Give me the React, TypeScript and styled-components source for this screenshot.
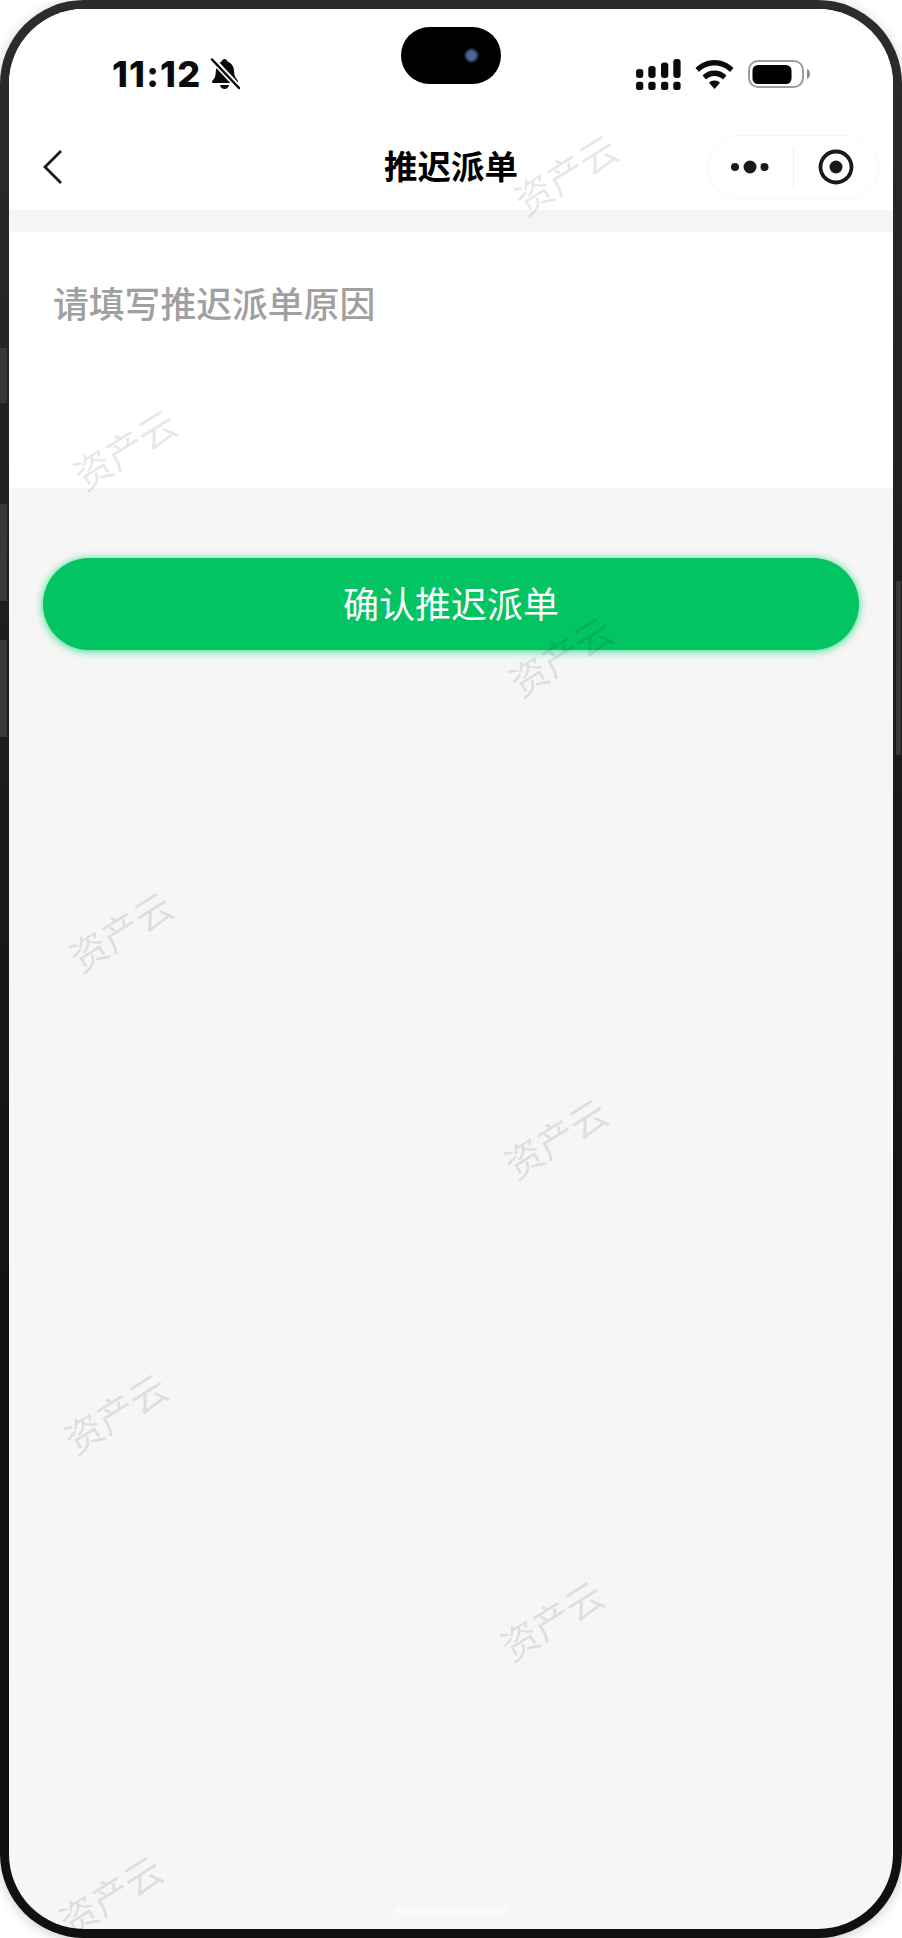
import React from 'react';
import styled, { createGlobalStyle } from 'styled-components';

const GlobalStyle = createGlobalStyle`
  html, body {
    margin: 0;
    padding: 0;
    background: #fff;
  }
  body {
    font-family: "Noto Sans CJK SC", "Liberation Sans", sans-serif;
  }
`;

const Frame = styled.div`
  position: relative;
  box-sizing: border-box;
  width: 902px;
  height: 1938px;
  padding: 9px;
  border-radius: 84px;
  background: linear-gradient(#2c2c2e, #1e1e20 30%, #121213 70%, #101011);
  box-shadow: 0 2px 12px rgba(0, 0, 0, 0.2);
`;

const SideKey = styled.span<{ $top: number; $height: number; $right?: boolean }>`
  position: absolute;
  top: ${(p) => p.$top}px;
  ${(p) => (p.$right ? 'right: 1px; width: 5px;' : 'left: 0; width: 7px;')}
  height: ${(p) => p.$height}px;
  background: #38383a;
`;

const Screen = styled.div`
  position: relative;
  height: 100%;
  border-radius: 75px;
  background: #f6f6f6;
  display: flex;
  flex-direction: column;
  overflow: hidden;
`;

const Head = styled.div`
  background: #fff;
  height: 201px;
  flex: none;
  display: flex;
  flex-direction: column;
`;

const StatusBar = styled.div`
  height: 101px;
  flex: none;
  display: grid;
  grid-template-columns: 1fr 100px 1fr;
  align-items: start;
  padding: 18px 0 0;
  box-sizing: border-box;
`;

const StatusLeft = styled.div`
  display: flex;
  align-items: center;
  height: 56px;
  margin-top: 19px;
  padding-left: 103px;
  gap: 9px;
`;

const Time = styled.span`
  font-family: Inter, "Liberation Sans", sans-serif;
  font-weight: 800;
  font-size: 36px;
  line-height: 34px;
  letter-spacing: 1.2px;
  color: #0a0a0a;
`;

const Island = styled.div`
  width: 100px;
  height: 57px;
  border-radius: 29px;
  background: #000;
  display: flex;
  align-items: center;
  justify-content: flex-end;
  padding-right: 22px;
  box-sizing: border-box;
`;

const Camera = styled.span`
  width: 15px;
  height: 15px;
  border-radius: 50%;
  background: radial-gradient(circle, #47689a 0 38%, #1b2233 62%, #10131c 100%);
`;

const StatusRight = styled.div`
  display: flex;
  align-items: center;
  height: 56px;
  margin-top: 19px;
  padding-left: 135px;
  gap: 14px;
`;

const Nav = styled.div`
  position: relative;
  flex: 1;
  display: flex;
  align-items: center;
  justify-content: space-between;
  padding: 13px 14px 0 34px;
`;

const Title = styled.div`
  position: absolute;
  left: 0;
  right: 0;
  top: 30px;
  text-align: center;
  font-size: 33.5px;
  line-height: 50px;
  font-weight: 700;
  color: #000;
`;

const Capsule = styled.div`
  box-sizing: border-box;
  width: 172px;
  height: 64px;
  border: 1.5px solid #f6f6f6;
  border-radius: 32px;
  display: flex;
  align-items: center;
`;

const CapsuleCell = styled.div`
  flex: 1;
  display: flex;
  align-items: center;
  justify-content: center;
`;

const CapsuleLine = styled.span`
  width: 1px;
  height: 40px;
  background: #efefef;
`;

const Gap = styled.div`
  flex: none;
  height: 22px;
  background: #f5f5f5;
`;

const Field = styled.div`
  flex: none;
  height: 256px;
  background: #fff;
  padding: 44px 0 0 44px;
  box-sizing: border-box;
`;

const Placeholder = styled.div`
  font-size: 35.8px;
  line-height: 52px;
  font-weight: 500;
  color: #a0a0a0;
`;

const Actions = styled.div`
  flex: none;
  padding: 70px 34px 0;
`;

const ConfirmButton = styled.button`
  display: block;
  width: 100%;
  height: 92px;
  border: none;
  border-radius: 46px;
  background: #03c463;
  box-shadow: 0 1px 8px rgba(0, 214, 110, 0.85);
  color: #fff;
  font-family: inherit;
  font-size: 36px;
  font-weight: 400;
  padding: 0 0 4px;
`;

const HomeBar = styled.span`
  position: absolute;
  left: 386px;
  bottom: 14px;
  width: 113px;
  height: 8px;
  border-radius: 4px;
  background: #fafafa;
`;

const Mark = styled.span<{ $x: number; $y: number }>`
  position: absolute;
  left: ${(p) => p.$x - 10}px;
  top: ${(p) => p.$y - 11}px;
  transform: translate(-50%, -50%) rotate(-32deg);
  font-size: 37.5px;
  line-height: 42px;
  font-weight: 400;
  white-space: nowrap;
  color: rgba(0, 0, 0, 0.11);
  pointer-events: none;
`;

const marks = [
  [566, 175],
  [125, 450],
  [561, 657],
  [121, 932],
  [556, 1139],
  [116, 1414],
  [552, 1621],
  [111, 1896],
];

const BellOff = () => (
  <svg width="30" height="32" viewBox="0 0 30 32">
    <path
      d="M14.500 1C16 1 17 2 17.500 3.500 21.500 5 24 8.500 24 13l.5 4c.5 2.500 2.500 4 3.500 6v2H3c-1 0-1.500-1.500-.5-2.500 2-2 3-4 3-6.500L6 12c.5-4 2.500-7 5.500-8.500C12 2 13 1 14.500 1z"
      fill="#0a0a0a"
    />
    <path d="M10 27h9c-.5 2.500-2.300 4-4.500 4S10.500 29.500 10 27z" fill="#0a0a0a" />
    <path d="M1 0 30 31" stroke="#fff" strokeWidth="6" />
    <path d="M2 1.500 29 30" stroke="#0a0a0a" strokeWidth="2.500" strokeLinecap="round" />
  </svg>
);

const SignalBars = () => (
  <svg width="45" height="31" viewBox="0 0 45 31" fill="#0a0a0a">
    <rect x="0" y="10" width="7.300" height="9" rx="3" />
    <rect x="12.300" y="7" width="7.300" height="12" rx="3" />
    <rect x="25" y="3.500" width="7.300" height="15.500" rx="3" />
    <rect x="37.300" y="0" width="7.300" height="19" rx="3" />
    <rect x="0" y="22.700" width="7.300" height="8.300" rx="2.500" />
    <rect x="12.300" y="22.700" width="7.300" height="8.300" rx="2.500" />
    <rect x="25" y="22.700" width="7.300" height="8.300" rx="2.500" />
    <rect x="37.300" y="22.700" width="7.300" height="8.300" rx="2.500" />
  </svg>
);

const Wifi = () => (
  <svg width="39" height="29" viewBox="0 0 39 29" fill="#0a0a0a">
    <path d="M19.500 0c7.500 0 14 3 19 8l-3.500 4c-4-4-9.500-6.400-15.500-6.400S8 8 4 12L.5 8c5-5 11.500-8 19-8z" />
    <path d="M19.500 10.500c4.800 0 9 1.900 12 5l-3.500 4c-2.200-2.200-5.200-3.500-8.500-3.500s-6.300 1.300-8.500 3.500l-3.500-4c3-3.100 7.200-5 12-5z" />
    <path d="M19.500 20.500c2.300 0 4.300.9 5.500 2.300L19.500 29 14 22.800c1.200-1.400 3.200-2.300 5.500-2.300z" />
  </svg>
);

const Battery = () => (
  <svg width="62" height="28" viewBox="0 0 62 28">
    <rect x="1" y="1" width="54" height="26" rx="9" fill="none" stroke="#9c9c9c" strokeWidth="2" />
    <rect x="4.500" y="5" width="39" height="19" rx="5.500" fill="#000" />
    <path d="M59 9c2 .6 3 2.400 3 5s-1 4.400-3 5z" fill="#8f8f8f" />
  </svg>
);

const BackArrow = () => (
  <svg width="19" height="34" viewBox="0 0 19 34">
    <path d="M18 1 2 17l16 16" fill="none" stroke="#1a1a1a" strokeWidth="2.800" />
  </svg>
);

const MoreDots = () => (
  <svg width="38" height="14" viewBox="0 0 38 14" fill="#1a1a1a">
    <circle cx="4" cy="7" r="4" />
    <circle cx="19" cy="7" r="6.500" />
    <circle cx="33.500" cy="7" r="4" />
  </svg>
);

const Target = () => (
  <svg width="36" height="36" viewBox="0 0 36 36">
    <circle cx="18" cy="18" r="15.500" fill="none" stroke="#1a1a1a" strokeWidth="3.800" />
    <circle cx="18" cy="18" r="6.500" fill="#1a1a1a" />
  </svg>
);

export default function App() {
  return (
    <>
      <GlobalStyle />
      <Frame>
        <SideKey $top={348} $height={55} />
        <SideKey $top={504} $height={97} />
        <SideKey $top={640} $height={97} />
        <SideKey $top={581} $height={174} $right />
        <Screen>
          <Head>
            <StatusBar>
              <StatusLeft>
                <Time>11:12</Time>
                <BellOff />
              </StatusLeft>
              <Island>
                <Camera />
              </Island>
              <StatusRight>
                <SignalBars />
                <Wifi />
                <Battery />
              </StatusRight>
            </StatusBar>
            <Nav>
              <BackArrow />
              <Title>推迟派单</Title>
              <Capsule>
                <CapsuleCell>
                  <MoreDots />
                </CapsuleCell>
                <CapsuleLine />
                <CapsuleCell>
                  <Target />
                </CapsuleCell>
              </Capsule>
            </Nav>
          </Head>
          <Gap />
          <Field>
            <Placeholder>请填写推迟派单原因</Placeholder>
          </Field>
          <Actions>
            <ConfirmButton>确认推迟派单</ConfirmButton>
          </Actions>
          <HomeBar />
          {marks.map(([x, y]) => (
            <Mark key={y} $x={x} $y={y}>
              资产云
            </Mark>
          ))}
        </Screen>
      </Frame>
    </>
  );
}
